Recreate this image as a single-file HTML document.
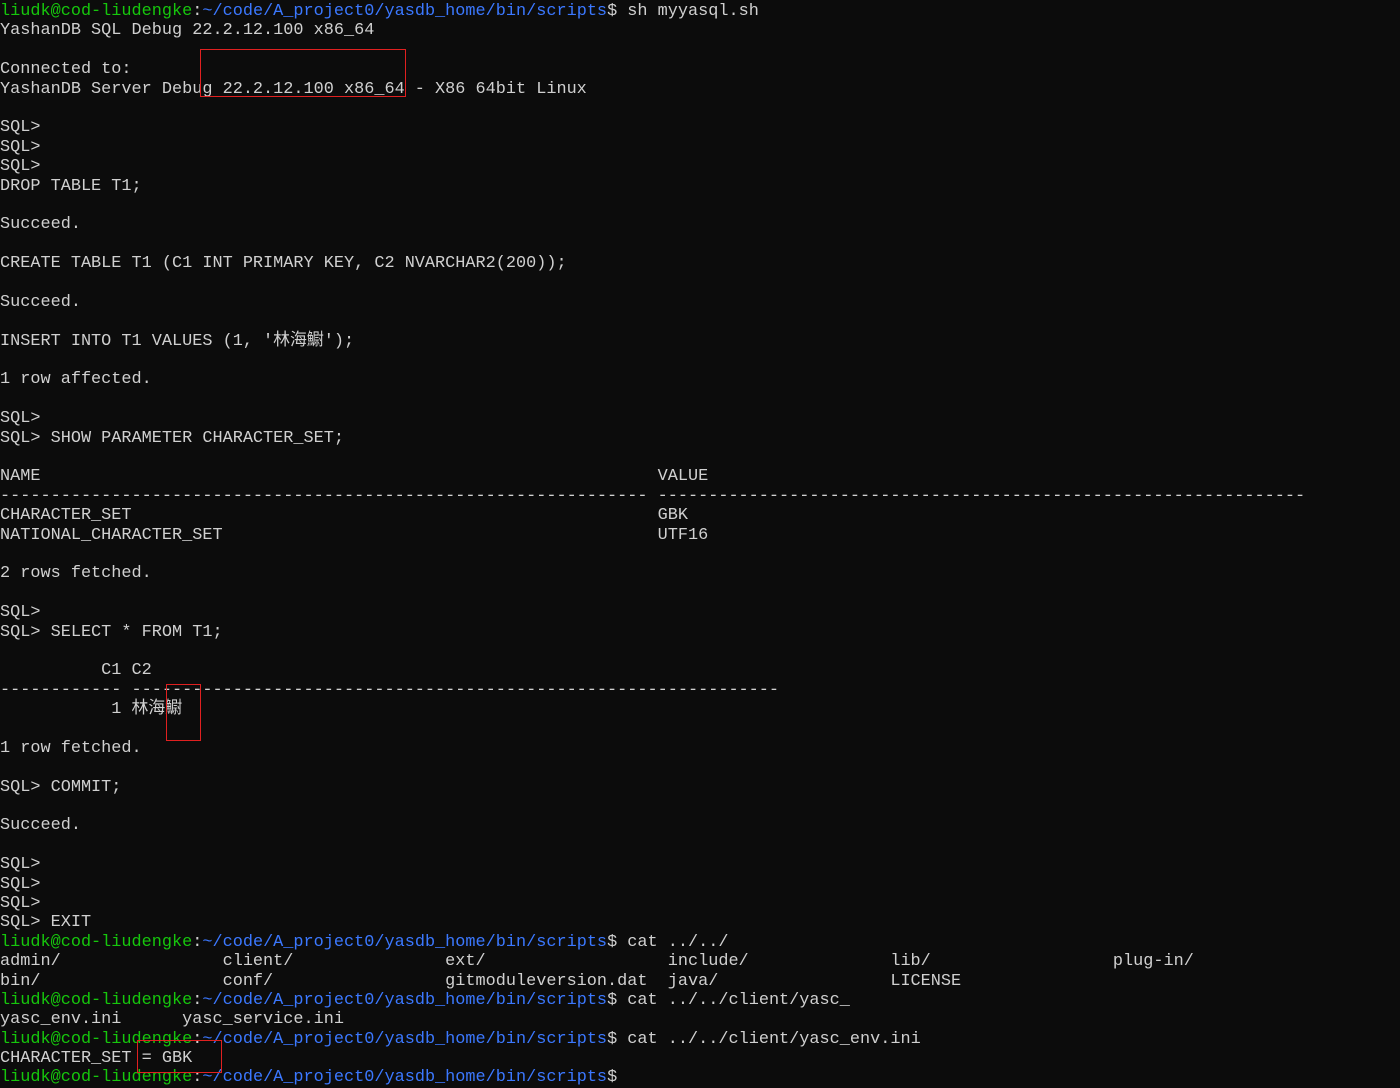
<!DOCTYPE html>
<html><head><meta charset="utf-8"><style>
html,body{margin:0;padding:0;background:#0c0c0c;width:1400px;height:1074px;overflow:hidden}
pre{margin:0;position:absolute;left:0;top:2px;font-family:"Liberation Mono","Noto Sans CJK SC",monospace;font-size:16.87px;line-height:19.39px;color:#d0d0d0;white-space:pre}
.g{color:#16c60c}.b{color:#3b78ff}
.box{position:absolute;border:1.5px solid #e02020}
</style></head><body>
<pre><span class="g">liudk@cod-liudengke</span>:<span class="b">~/code/A_project0/yasdb_home/bin/scripts</span>$ sh myyasql.sh
YashanDB SQL Debug 22.2.12.100 x86_64

Connected to:
YashanDB Server Debug 22.2.12.100 x86_64 - X86 64bit Linux

SQL&gt;
SQL&gt;
SQL&gt;
DROP TABLE T1;

Succeed.

CREATE TABLE T1 (C1 INT PRIMARY KEY, C2 NVARCHAR2(200));

Succeed.

INSERT INTO T1 VALUES (1, '林海䲁');

1 row affected.

SQL&gt;
SQL&gt; SHOW PARAMETER CHARACTER_SET;

NAME                                                             VALUE
---------------------------------------------------------------- ----------------------------------------------------------------
CHARACTER_SET                                                    GBK
NATIONAL_CHARACTER_SET                                           UTF16

2 rows fetched.

SQL&gt;
SQL&gt; SELECT * FROM T1;

          C1 C2
------------ ----------------------------------------------------------------
           1 林海䲁

1 row fetched.

SQL&gt; COMMIT;

Succeed.

SQL&gt;
SQL&gt;
SQL&gt;
SQL&gt; EXIT
<span class="g">liudk@cod-liudengke</span>:<span class="b">~/code/A_project0/yasdb_home/bin/scripts</span>$ cat ../../
admin/                client/               ext/                  include/              lib/                  plug-in/
bin/                  conf/                 gitmoduleversion.dat  java/                 LICENSE
<span class="g">liudk@cod-liudengke</span>:<span class="b">~/code/A_project0/yasdb_home/bin/scripts</span>$ cat ../../client/yasc_
yasc_env.ini      yasc_service.ini
<span class="g">liudk@cod-liudengke</span>:<span class="b">~/code/A_project0/yasdb_home/bin/scripts</span>$ cat ../../client/yasc_env.ini
CHARACTER_SET = GBK
<span class="g">liudk@cod-liudengke</span>:<span class="b">~/code/A_project0/yasdb_home/bin/scripts</span>$ </pre>
<div class="box" style="left:200px;top:49px;width:204px;height:46px"></div>
<div class="box" style="left:166px;top:684px;width:33px;height:55px"></div>
<div class="box" style="left:137px;top:1040px;width:83px;height:31px"></div>
</body></html>
